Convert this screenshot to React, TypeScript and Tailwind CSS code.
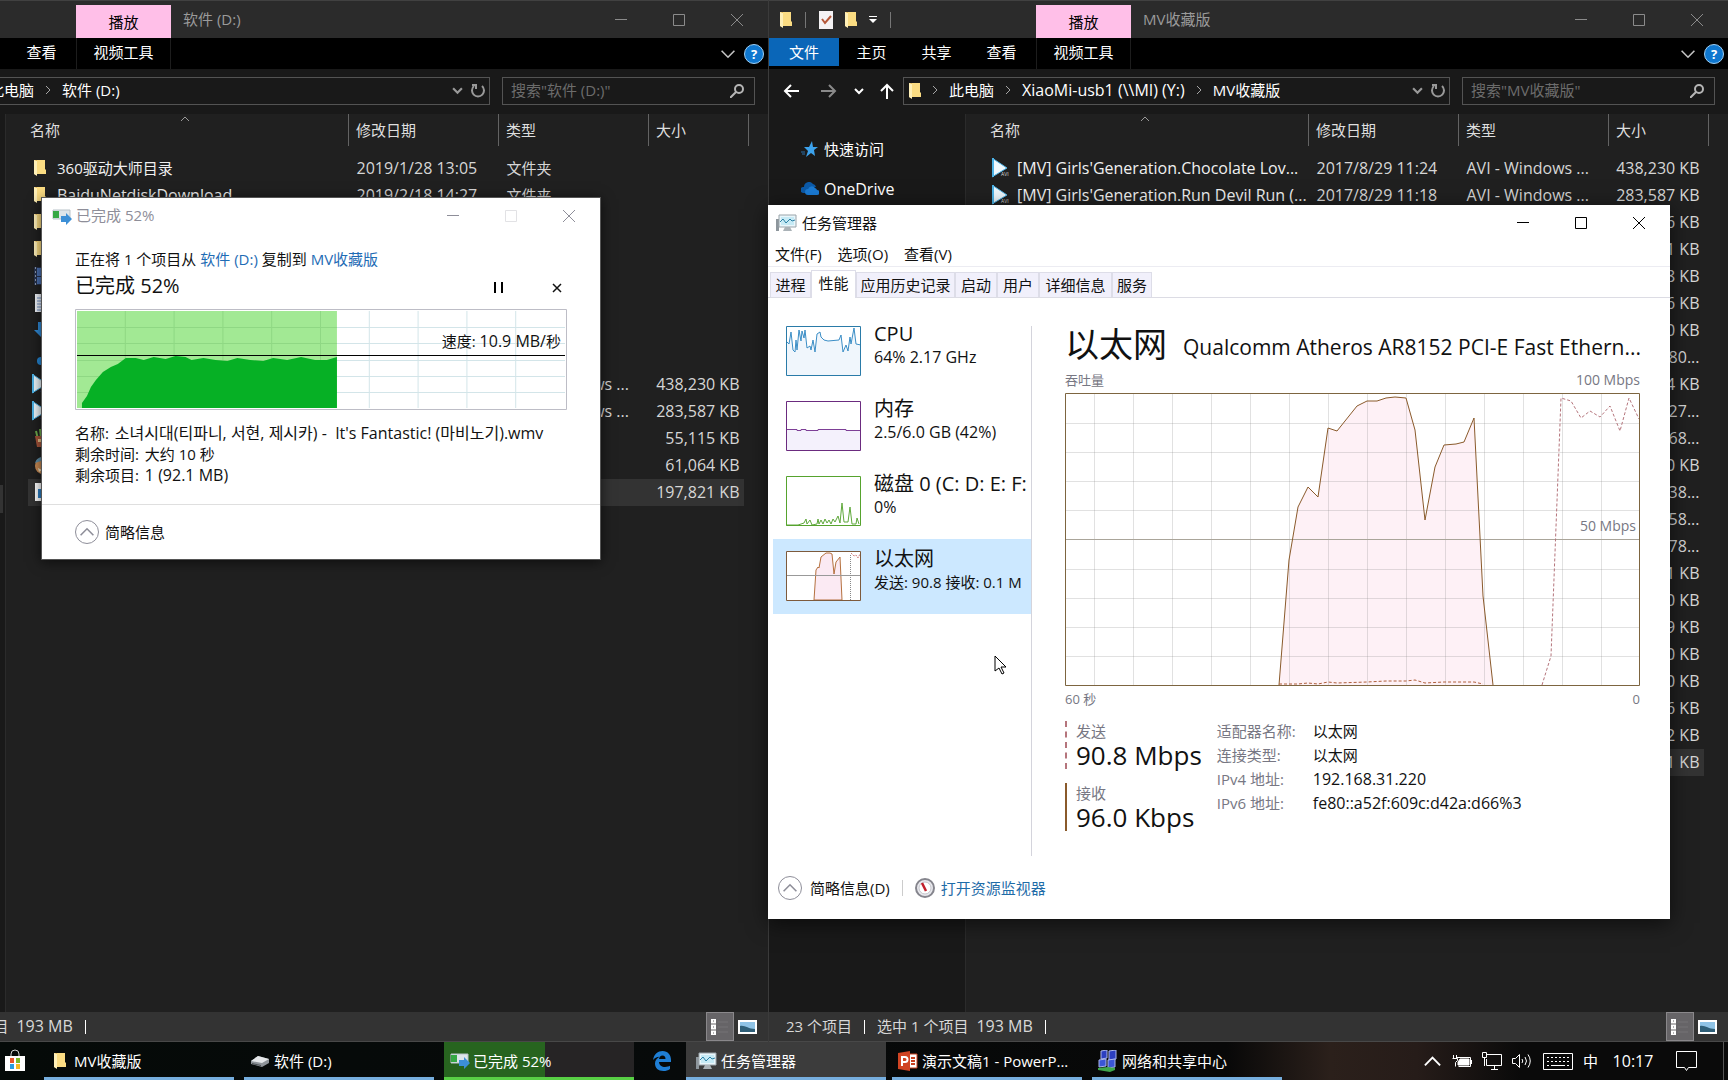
import { useState } from 'react';
import type { ReactNode } from 'react';
import { clsx } from 'clsx';

type FileRow = {
  icon?: 'folder' | 'video' | 'film' | 'doc' | 'down' | 'dot' | 'fries' | 'face' | 'wmv';
  name?: string;
  date?: string;
  type?: string;
  size?: string;
  selected?: boolean;
};

const AVI = 'AVI - Windows ...';

const leftRows: FileRow[] = [
  { icon: 'folder', name: '360驱动大师目录', date: '2019/1/28 13:05', type: '文件夹' },
  { icon: 'folder', name: 'BaiduNetdiskDownload', date: '2019/2/18 14:27', type: '文件夹' },
  { icon: 'folder' },
  { icon: 'folder' },
  { icon: 'film' },
  { icon: 'doc' },
  { icon: 'down' },
  { icon: 'dot' },
  { icon: 'video', type: AVI, size: '438,230 KB' },
  { icon: 'video', type: AVI, size: '283,587 KB' },
  { icon: 'fries', size: '55,115 KB' },
  { icon: 'face', size: '61,064 KB' },
  { icon: 'wmv', size: '197,821 KB', selected: true },
];

const rightRows: FileRow[] = [
  { icon: 'video', name: "[MV] Girls'Generation.Chocolate Lov...", date: '2017/8/29 11:24', type: AVI, size: '438,230 KB' },
  { icon: 'video', name: "[MV] Girls'Generation.Run Devil Run (...", date: '2017/8/29 11:18', type: AVI, size: '283,587 KB' },
  { size: '6 KB' },
  { size: '1 KB' },
  { size: '8 KB' },
  { size: '6 KB' },
  { size: '0 KB' },
  { size: '80...' },
  { size: '4 KB' },
  { size: '27...' },
  { size: '68...' },
  { size: '0 KB' },
  { size: '38...' },
  { size: '58...' },
  { size: '78...' },
  { size: '1 KB' },
  { size: '0 KB' },
  { size: '9 KB' },
  { size: '0 KB' },
  { size: '0 KB' },
  { size: '6 KB' },
  { size: '2 KB' },
  { size: '1 KB', selected: true },
];

// latin strings run one size larger than the Chinese ones
const sizeFor = (text?: string) => (text && /[\u4e00-\u9fff]/.test(text) ? 'text-[15px]' : 'text-base');

/* ---------- icons ---------- */

const FolderIcon = () => (
  <svg width="12" height="17" viewBox="0 0 12 17" className="shrink-0">
    <path d="M0 1h9v13H3v2L0 15z" fill="#e9b954" />
    <path d="M3 1h8v9l1 1v4H3z" fill="#fbdc82" />
    <path d="M0 1l3 1v15l-3-2z" fill="#fff0b8" />
  </svg>
);

const VideoIcon = () => (
  <svg width="20" height="20" viewBox="0 0 20 20" className="shrink-0">
    <path d="M0 0v19L15 10z" fill="#eef8fd" />
    <path d="M1 0v19" stroke="#4cb2e6" strokeWidth="2" />
    <path d="M0 0l15 10L0 19" fill="none" stroke="#4cb2e6" />
    <text x="9" y="18" fontSize="5" fill="#ddd">AVI</text>
  </svg>
);

const FileIcon = ({ kind }: { kind: FileRow['icon'] }) => {
  if (!kind) return null;
  if (kind === 'folder') return <FolderIcon />;
  if (kind === 'video') return <span className="-ml-0.5 block"><VideoIcon /></span>;
  return (
    <svg width="18" height="20" viewBox="0 0 18 20" className="shrink-0">
      {kind === 'film' && (
        <>
          <path d="M0 1h18v18H0z" fill="#26314a" />
          <path d="M3 2h12v8H3zM3 11h12v7H3z" fill="#4a70b0" />
          <path d="M1.500 1v18" stroke="#8c98ad" strokeDasharray="2 2" />
        </>
      )}
      {kind === 'doc' && (
        <>
          <path d="M1 1h16v18H1z" fill="#f1f5fb" />
          <path d="M3 5h12M3 8h12M3 11h12M3 14h12M3 17h8" stroke="#6f8fc4" />
        </>
      )}
      {kind === 'down' && <path d="M4 2h8v8h4l-8 8-8-8h4z" fill="#2f8ad8" />}
      {kind === 'dot' && (
        <>
          <circle cx="7" cy="14" r="4" fill="#2487d6" />
          <circle cx="9" cy="5" r="2" fill="#2487d6" />
        </>
      )}
      {kind === 'fries' && (
        <>
          <path d="M2 3l2 8M6 1l1 9M10 2l-1 8" stroke="#6fae4c" strokeWidth="2" />
          <path d="M1 8h14l-2 11H3z" fill="#a9553a" />
          <path d="M4 11h6v3H4z" fill="#e8c58c" />
        </>
      )}
      {kind === 'face' && (
        <>
          <circle cx="9" cy="11" r="8" fill="#c98a53" />
          <path d="M1 8c2-6 6-7 15-6l-3 5-6-1z" fill="#5f8fa8" />
          <path d="M4 13l4 2-3 2z" fill="#f0e2c0" />
        </>
      )}
      {kind === 'wmv' && (
        <>
          <path d="M1 1h12l4 4v14H1z" fill="#fff" />
          <path d="M4 7h11v9H4z" fill="#2d7fc4" />
          <path d="M8 9v5l4-2z" fill="#fff" />
        </>
      )}
    </svg>
  );
};

const Chevron = ({ dir = 'down', size = 10, width = 2 }: { dir?: 'down' | 'right' | 'up'; size?: number; width?: number }) => {
  const d = { down: 'M1 3l4 4 4-4', right: 'M3 1l4 4-4 4', up: 'M1 7l4-4 4 4' }[dir];
  return (
    <svg width={size} height={size} viewBox="0 0 10 10" fill="none" stroke="currentColor" strokeWidth={width} className="shrink-0">
      <path d={d} />
    </svg>
  );
};

const TaskMgrIcon = () => (
  <svg width="21" height="18" viewBox="0 0 21 18" className="shrink-0">
    <path d="M0 5h3v12H0z" fill="#8d969c" />
    <path d="M3 1h17v12H3z" fill="#e9f6fb" stroke="#9aa4aa" />
    <path d="M5 3h13v8H5z" fill="#c6eaf5" />
    <path d="M4 8l3-3 3 4 4-4 2 2 3-1" fill="none" stroke="#2b7fa3" />
    <path d="M9 13h5l2 4H7z" fill="#aab2b7" />
  </svg>
);

const CopyIcon = () => (
  <svg width="20" height="17" viewBox="0 0 20 17" className="shrink-0">
    <path d="M1 2h17v9H1z" fill="#dde5ea" stroke="#b9c3c9" />
    <path d="M1 3h6v7H1z" fill="#35a845" />
    <path d="M9 8h5V5l6 6-6 6v-3H9z" fill="#3c8fd6" />
  </svg>
);

const DriveIcon = () => (
  <svg width="20" height="14" viewBox="0 0 20 14" className="shrink-0">
    <path d="M1 7l7-5 11 3v4l-7 4-11-3z" fill="#8e9499" />
    <path d="M1 7l7-5 11 3-7 4z" fill="#e4e7e9" />
    <path d="M2 9l9 2v1L2 10z" fill="#4a4f53" />
  </svg>
);

const WindowButtons = ({ className, fadeMax }: { className?: string; fadeMax?: boolean }) => (
  <div className={clsx('ml-auto flex h-full shrink-0 pr-0.5', className)}>
    <button aria-label="最小化" className="flex w-[58px] items-center justify-center">
      <svg width="12" height="12" stroke="currentColor"><path d="M0 5.500h12" /></svg>
    </button>
    <button aria-label="最大化" className={clsx('flex w-[58px] items-center justify-center', fadeMax && 'opacity-25')}>
      <svg width="12" height="12" fill="none" stroke="currentColor"><path d="M.5.5h11v11H.5z" /></svg>
    </button>
    <button aria-label="关闭" className="flex w-[58px] items-center justify-center">
      <svg width="12" height="12" stroke="currentColor"><path d="M0 0l12 12M12 0L0 12" /></svg>
    </button>
  </div>
);

/* ---------- file explorer ---------- */

type ExplorerProps = {
  title: string;
  crumbs: string[];
  rows: FileRow[];
  nav: ReactNode;
};

const Explorer = ({ title, crumbs, rows, nav }: ExplorerProps) => (
  <section className="flex h-full min-w-0 flex-1 flex-col border-l border-[#3b3b3b] bg-[#191919] text-[15px] leading-5 text-white">
    <header className="flex h-[38px] shrink-0 items-center border-t border-[#414141] bg-[#2b2b2b]">
      <div className="flex w-[267px] shrink-0 items-center gap-3 pl-[11px]">
        <FolderIcon />
        <span className="mx-px h-4 w-px bg-[#777]" />
        <svg width="14" height="18" viewBox="0 0 14 18">
          <path d="M0 0h14v18H0z" fill="#f4f2f4" />
          <path d="M3 8l3 4 6-7" fill="none" stroke="#b5583a" strokeWidth="2" />
        </svg>
        <FolderIcon />
        <svg width="8" height="8" viewBox="0 0 8 8" fill="#fff"><path d="M0 0h8v1H0zM0 3h8L4 7z" /></svg>
        <span className="mx-px h-4 w-px bg-[#777]" />
      </div>
      <button className="mt-1 h-[33px] w-[95px] shrink-0 bg-[#ffbfe8] text-black">播放</button>
      <h1 className="ml-3 pb-0.5 text-[#9a9a9a]">{title}</h1>
      <WindowButtons className="text-[#8b8b8b]" />
    </header>

    <div className="flex h-[31px] shrink-0 bg-black">
      <div className="flex w-[267px] shrink-0">
        <button className="h-7 w-[70px] bg-[#0a66b8]">文件</button>
        <button className="w-[65px] pb-1">主页</button>
        <button className="w-[65px] pb-1">共享</button>
        <button className="w-[65px] pb-1">查看</button>
      </div>
      <button className="w-[95px] shrink-0 border-x border-[#1d1d1d] pb-1">视频工具</button>
      <div className="ml-auto flex items-center gap-2 pr-1 text-[#c4c4c4]">
        <button aria-label="展开功能区"><Chevron size={16} width={1} /></button>
        <button aria-label="帮助" className="h-5 w-5 rounded-full border border-[#9fd0f5] bg-[#0f77cf] text-[13px] leading-4 font-bold text-white">?</button>
      </div>
    </div>

    <div className="flex h-[45px] shrink-0 items-start pt-2 pr-[13px]">
      <div className="flex h-7 w-[134px] shrink-0 items-center">
        <button aria-label="后退" className="flex w-11 justify-center">
          <svg width="16" height="14" fill="none" stroke="#fff" strokeWidth="2"><path d="M16 7H2M8 1L2 7l6 6" /></svg>
        </button>
        <button aria-label="前进" className="flex w-8 justify-center">
          <svg width="16" height="14" fill="none" stroke="#8a8a8a" strokeWidth="2"><path d="M0 7h14M8 1l6 6-6 6" /></svg>
        </button>
        <button aria-label="最近位置" className="flex w-7 justify-center"><Chevron /></button>
        <button aria-label="上移" className="flex w-7 justify-center">
          <svg width="14" height="16" fill="none" stroke="#fff" strokeWidth="2"><path d="M7 16V2M1 8l6-6 6 6" /></svg>
        </button>
      </div>
      <nav className="flex h-7 min-w-0 flex-1 items-center gap-[9px] border border-[#535353] pr-1 pb-0.5 pl-[5px]">
        <FolderIcon />
        {crumbs.map((crumb) => (
          <span key={crumb} className="flex shrink-0 items-center gap-[9px]">
            <span className="text-[#a5a5a5]"><Chevron dir="right" size={10} width={1} /></span>
            <button className={sizeFor(crumb)}>{crumb}</button>
          </span>
        ))}
        <div className="ml-auto flex shrink-0 items-center gap-2 text-[#999]">
          <button aria-label="历史"><Chevron size={11} width={2} /></button>
          <button aria-label="刷新">
            <svg width="14" height="15" viewBox="0 0 14 15" fill="none" stroke="currentColor" strokeWidth="2">
              <path d="M3 3a6 6 0 1 0 8 0M1 2h4v4" />
            </svg>
          </button>
        </div>
      </nav>
      <label className="ml-3 flex h-7 w-[253px] shrink-0 items-center border border-[#535353] pr-2.5 pl-2">
        <input
          type="search"
          aria-label="搜索"
          className="min-w-0 flex-1 bg-transparent pb-0.5 placeholder:text-[#6c6c6c] focus:outline-none"
          placeholder={`搜索"${title}"`}
        />
        <svg width="14" height="14" fill="none" stroke="#b5b5b5" strokeWidth="2">
          <circle cx="9" cy="5" r="4" />
          <path d="M6 8l-6 6" />
        </svg>
      </label>
    </div>

    <div className="flex min-h-0 flex-1">
      <aside className="w-[197px] shrink-0 overflow-hidden border-r border-[#2b2b2b]">{nav}</aside>
      <div className="min-w-0 flex-1 overflow-hidden bg-[#202020] pr-[19px] pl-[22px]">
        <table className="w-full table-fixed border-collapse text-left">
          <thead>
            <tr className="h-8 text-[#dedede] [&>th]:p-0 [&>th]:font-normal">
              <th className="relative">
                <span className="pl-0.5">名称</span>
                <span className="absolute top-0 left-[152px] text-[#999]"><Chevron dir="up" size={10} width={1} /></span>
              </th>
              <th className="w-[150px] border-l border-[#636363]"><span className="pl-[7px]">修改日期</span></th>
              <th className="w-[150px] border-l border-[#636363]"><span className="pl-[7px]">类型</span></th>
              <th className="w-[95px] border-l border-[#636363]"><span className="pl-[7px]">大小</span></th>
              <th className="w-[5px] border-r border-[#636363]" />
            </tr>
            <tr className="h-[9px]" />
          </thead>
          <tbody>
            {rows.map((row, i) => (
              <tr
                key={i}
                className={clsx('h-[27px] text-[#d6d6d6] [&>td]:p-0 [&>td]:pb-0.5', row.selected && '[&>td:not(:last-child)]:bg-[#333]')}
              >
                <td>
                  <div className="flex h-[25px] items-center overflow-hidden pl-1.5">
                    <span className="w-[23px] shrink-0"><FileIcon kind={row.icon} /></span>
                    <span className={clsx('whitespace-nowrap text-[#f0f0f0]', sizeFor(row.name))}>{row.name}</span>
                  </div>
                </td>
                <td><span className="block pl-2 text-base leading-5 whitespace-nowrap">{row.date}</span></td>
                <td><span className={clsx('block pl-2 leading-5 whitespace-nowrap', sizeFor(row.type))}>{row.type}</span></td>
                <td><span className="block pr-1 text-right text-base leading-5 whitespace-nowrap">{row.size}</span></td>
                <td />
              </tr>
            ))}
          </tbody>
        </table>
      </div>
    </div>

    <footer className="flex h-[30px] shrink-0 items-center border-b border-[#484848] bg-[#333] pl-[17px] text-[#d8d8d8]">
      <span className="pb-0.5">23 个项目</span>
      <span className="mx-3 h-3.5 w-px bg-white" />
      <span className="pb-0.5">选中 1 个项目</span>
      <span className="ml-2 pb-0.5 text-base leading-5">193 MB</span>
      <span className="mx-3 h-3.5 w-px bg-white" />
      <div className="ml-auto flex h-full items-center gap-1 pr-[11px]">
        <button aria-label="详细信息" className="flex h-full w-7 items-center justify-center border border-[#8a888b] bg-[#666467]">
          <svg width="18" height="16" fill="none" stroke="#fff">
            <path d="M1 .5h3v3H1zM1 6.500h3v3H1zM1 12.500h3v3H1z" strokeWidth="2" />
            <path d="M7 3h10M7 8h10M7 13h10" stroke="#757376" />
          </svg>
        </button>
        <button aria-label="大图标">
          <svg width="19" height="14" viewBox="0 0 19 14">
            <path d="M0 0h19v14H0z" fill="#fff" />
            <path d="M2 2h15v10H2z" fill="#8fc3e6" />
            <path d="M2 6c5-1 8 3 15 3v3H2z" fill="#2f5f78" />
          </svg>
        </button>
      </div>
    </footer>
  </section>
);

/* ---------- copy progress dialog ---------- */

const speedArea =
  'M6 98V93L11 86 15 77 20 70 27 62 35 57 42 54 50 48 60 48 68 50 78 47 90 49 100 46 110 47 116 50 128 48 140 50 152 51 162 48 175 50 188 51 198 48 212 50 226 47 240 50 252 50 262 47V98Z';

const CopyDialog = () => (
  <section className="absolute top-[197px] left-[41px] w-[560px] border border-[#555] bg-white text-[15px] leading-5 text-[#111] shadow-[0_2px_12px_rgba(0,0,0,0.6)]">
    <header className="flex h-9 items-center gap-1 pl-2.5 text-[#8e8e99]">
      <CopyIcon />
      <h2 className="pb-0.5">已完成 52%</h2>
      <WindowButtons fadeMax />
    </header>
    <div className="px-[33px] pt-[15px]">
      <p>
        正在将 1 个项目从 <a href="#d" className="text-[#1f6cb5]">软件 (D:)</a> 复制到 <a href="#mv" className="text-[#1f6cb5]">MV收藏版</a>
      </p>
      <div className="flex h-[33px] items-center">
        <p className="text-xl leading-7">已完成 52%</p>
        <div className="ml-auto flex gap-[38px] pt-1">
          <button aria-label="暂停" className="w-5">
            <svg width="10" height="11" className="mx-auto"><path d="M0 0h2v11H0zM7 0h2v11H7z" /></svg>
          </button>
          <button aria-label="取消" className="w-5">
            <svg width="10" height="10" viewBox="0 0 10 10" className="mx-auto" stroke="#111" strokeWidth="1.500"><path d="M1 1l8 8M9 1L1 9" /></svg>
          </button>
        </div>
      </div>
      <div className="relative mt-[7px]">
        <svg width="100%" height="101" viewBox="0 0 494 101" preserveAspectRatio="none" className="block">
          <path d="M.5.5h493v100H.5z" fill="#fff" stroke="#bdbdc6" />
          <path d="M50.500 2v97M99.500 2v97M148.500 2v97M197.500 2v97M246.500 2v97M295.500 2v97M344.500 2v97M393.500 2v97M442.500 2v97M2 18.500h490M2 34.500h490M2 51.500h490M2 67.500h490M2 83.500h490" stroke="#d3e5e9" />
          <path d="M2 2h261v97H2z" fill="#a2e994" />
          <path d="M50.500 2v97M99.500 2v97M148.500 2v97M197.500 2v97M246.500 2v97M2 18.500h261M2 34.500h261M2 51.500h261M2 67.500h261M2 83.500h261" stroke="#8fd884" />
          <path d={speedArea} transform="translate(1 1)" fill="#06b025" />
          <path d="M2 46.500h490" stroke="#000" />
        </svg>
        <span className="absolute top-[22px] right-1.5">速度: <span className="text-base leading-5">10.9 MB/</span>秒</span>
      </div>
      <div className="mt-[13px] leading-[21px]">
        <p className="whitespace-nowrap">
          名称: <span className="ml-0.5 text-base leading-5">소녀시대(티파니, 서현, 제시카) -&nbsp; It's Fantastic! (마비노기).wmv</span>
        </p>
        <p>剩余时间: <span className="ml-0.5">大约 10 秒</span></p>
        <p>剩余项目: <span className="ml-0.5 text-base leading-5">1 (92.1 MB)</span></p>
      </div>
    </div>
    <footer className="mt-[18px] flex h-[55px] items-center border-t border-[#dfdfdf] px-[33px]">
      <button className="flex items-center gap-1.5">
        <span className="flex h-6 w-6 items-center justify-center rounded-full border border-[#8e8e99] text-[#8e8e99]">
          <Chevron dir="up" size={16} width={1} />
        </span>
        简略信息
      </button>
    </footer>
  </section>
);

/* ---------- task manager ---------- */

const tabs = [
  { label: '进程', width: 'w-[41px]' },
  { label: '性能', width: 'w-[45px]' },
  { label: '应用历史记录', width: 'w-[99px]' },
  { label: '启动', width: 'w-[42px]' },
  { label: '用户', width: 'w-[42px]' },
  { label: '详细信息', width: 'w-[73px]' },
  { label: '服务', width: 'w-[40px]' },
];

const received =
  '214,292 224,167 233,114 243,94 253,104 263,35 272,38 292,13 302,8 312,8 321,5 330,4 341,5 350,37 360,127 370,74 379,52 391,51 399,49 409,25 418,203 428,292';
const sent = '477,292 486,263 496,5 506,8 516,25 525,18 535,24 545,13 555,38 564,5 574,26';
const sentLow = '214,291 233,291 243,290 253,291 263,289 272,290 302,289 321,288 341,288 350,287 360,290 379,289 409,289 418,291';

const gridX = [29, 68, 107, 146, 185, 224, 263, 302, 341, 380, 419, 458, 497, 536];
const gridY = [30, 59, 88, 117, 176, 205, 234, 263];

const ThroughputChart = () => (
  <svg width="100%" height="293" viewBox="0 0 575 293" preserveAspectRatio="none" className="block">
    <polygon points={received} fill="#fef1f6" />
    <g stroke="#888" strokeOpacity="0.250">
      {gridX.map((x) => <path key={x} d={`M${x + 0.5} 0v292`} />)}
      {gridY.map((y) => <path key={y} d={`M0 ${y + 0.5}h575`} />)}
    </g>
    <path d="M0 146.500h575" stroke="#aaa59a" />
    <polyline points={received} fill="none" stroke="#8a5a2b" />
    <polyline points={sent} fill="none" stroke="#b5757c" strokeDasharray="3 2" />
    <polyline points={sentLow} fill="none" stroke="#b0603c" strokeDasharray="3 2" />
    <path d="M.5.5h574v292H.5z" fill="none" stroke="#7d6540" />
  </svg>
);

const Thumb = ({ stroke, children }: { stroke: string; children: ReactNode }) => (
  <svg width="75" height="50" viewBox="0 0 75 50" className="shrink-0">
    <path d="M.5.5h74v49H.5z" fill="#fff" />
    {children}
    <path d="M.5.5h74v49H.5z" fill="none" stroke={stroke} />
  </svg>
);

const cpuLine = '1,16 3,18 5,6 7,24 9,26 10,14 11,24 13,4 15,15 16,5 18,12 19,4 21,22 24,20 25,24 27,14 29,26 31,8 34,6 35,11 38,14 42,15 53,14 55,9 57,26 60,19 62,25 64,11 65,18 68,2 70,18 75,19';
const diskLine = '0,49 12,49 15,48 18,47 20,43 21,48 24,44 26,49 31,48 32,43 33,48 35,44 37,48 39,43 41,47 43,44 45,48 47,43 49,46 52,40 54,47 56,27 58,46 62,46 64,31 66,48 70,48 71,42 73,48';

const devices = [
  {
    id: 'cpu',
    title: 'CPU',
    detail: '64% 2.17 GHz',
    thumb: (
      <Thumb stroke="#2a7ba8">
        <polygon points={`${cpuLine} 75,49 1,49`} fill="#f0f6fc" />
        <polyline points={cpuLine} fill="none" stroke="#3b8ec6" />
      </Thumb>
    ),
  },
  {
    id: 'mem',
    title: '内存',
    detail: '2.5/6.0 GB (42%)',
    thumb: (
      <Thumb stroke="#6b2b7f">
        <path d="M1 29h73v20H1z" fill="#f4f1fc" />
        <path d="M1 28.500h10v1h4v-1h5v1h12v-1h28v1h14" fill="none" stroke="#7d3f96" />
      </Thumb>
    ),
  },
  {
    id: 'disk',
    title: '磁盘 0 (C: D: E: F:',
    detail: '0%',
    thumb: (
      <Thumb stroke="#56a32e">
        <polyline points={diskLine} fill="none" stroke="#5fa83c" />
      </Thumb>
    ),
  },
  {
    id: 'eth',
    title: '以太网',
    detail: '发送: 90.8 接收: 0.1 M',
    thumb: (
      <Thumb stroke="#7d5a3c">
        <path d="M28 49l2-30 2-3 1 1 2-11 5-4h4l2 1 2 20 2-12 4-5 2 43z" fill="#fbeaf3" stroke="#b5713f" />
        <path d="M0 24.500h75" stroke="#999" />
        <path d="M64.500 49V3" fill="none" stroke="#888" strokeDasharray="1 1" />
        <path d="M65 2l3 3 2-1 2 3 2-4" fill="none" stroke="#d08080" strokeDasharray="2 1" />
      </Thumb>
    ),
  },
];

const details = [
  ['适配器名称:', '以太网'],
  ['连接类型:', '以太网'],
  ['IPv4 地址:', '192.168.31.220'],
  ['IPv6 地址:', 'fe80::a52f:609c:d42a:d66%3'],
];

const TaskManager = () => {
  const [tab, setTab] = useState('性能');
  const [device, setDevice] = useState('eth');

  return (
    <section className="absolute top-[205px] left-4/9 w-[902px] bg-white text-[15px] leading-5 text-[#111] shadow-[0_4px_20px_rgba(0,0,0,0.6)]">
      <header className="flex h-9 items-center gap-[5px] pl-2">
        <TaskMgrIcon />
        <h2>任务管理器</h2>
        <WindowButtons className="text-black" />
      </header>
      <div className="flex h-[26px] items-center gap-4 border-b border-[#ececf2] pl-[7px]">
        <button>文件(F)</button>
        <button>选项(O)</button>
        <button>查看(V)</button>
      </div>
      <div role="tablist" className="flex h-[31px] items-end border-b border-[#dcdce4] pl-0.5">
        {tabs.map(({ label, width }) => (
          <button
            key={label}
            role="tab"
            aria-selected={tab === label}
            onClick={() => setTab(label)}
            className={clsx(
              'shrink-0 border-x border-t border-[#dddde8] whitespace-nowrap',
              width,
              tab === label ? '-mb-px h-7 bg-white pb-1' : 'h-[25px] bg-[#f1f0fb]',
            )}
          >
            {label}
          </button>
        ))}
      </div>

      <div className="flex pt-4">
        <div className="w-[263px] shrink-0 pl-[5px]">
          {devices.map(({ id, title, detail, thumb }) => (
            <button
              key={id}
              onClick={() => setDevice(id)}
              className={clsx('flex h-[75px] w-full gap-[13px] pt-3 pl-[13px] text-left whitespace-nowrap', device === id && 'bg-[#cce8ff]')}
            >
              {thumb}
              <span className="-mt-1">
                <span className="block text-xl leading-6">{title}</span>
                <span className={clsx('block leading-[22px]', sizeFor(detail))}>{detail}</span>
              </span>
            </button>
          ))}
        </div>

        <div className="mt-3 min-w-0 flex-1 border-l border-[#d4d4dc] pr-[30px] pb-[25px] pl-[33px]">
          <div className="flex items-end gap-4">
            <h3 className="shrink-0 pb-0.5 text-[34px] leading-9">以太网</h3>
            <span className="min-w-0 flex-1 text-right text-[21px] leading-[34px] whitespace-nowrap">Qualcomm Atheros AR8152 PCI-E Fast Ethern...</span>
          </div>
          <div className="mt-1.5 flex justify-between text-[13px] text-[#777783]">
            <span>吞吐量</span>
            <span className="text-sm leading-5">100 Mbps</span>
          </div>
          <div className="relative mt-[3px]">
            <ThroughputChart />
            <span className="absolute top-[123px] right-1 text-sm leading-5 text-[#777783]">50 Mbps</span>
          </div>
          <div className="mt-[3px] flex justify-between text-[13px] text-[#777783]">
            <span>60 秒</span>
            <span>0</span>
          </div>
          <div className="mt-3 flex gap-[15px]">
            <div className="flex flex-col gap-3.5">
              <div className="border-l-2 border-dashed border-[#b5757c] pl-[9px]">
                <p className="text-[#777783]">发送</p>
                <p className="text-[26px] leading-7">90.8 Mbps</p>
              </div>
              <div className="border-l-2 border-[#8a5a2b] pl-[9px]">
                <p className="text-[#777783]">接收</p>
                <p className="text-[26px] leading-7">96.0 Kbps</p>
              </div>
            </div>
            <dl className="grid auto-rows-[24px] grid-cols-[80px_1fr] gap-x-4">
              {details.map(([label, value]) => (
                <div key={label} className="contents">
                  <dt className="leading-5 whitespace-nowrap text-[#777783]">{label}</dt>
                  <dd className={clsx('leading-5', sizeFor(value))}>{value}</dd>
                </div>
              ))}
            </dl>
          </div>
        </div>
      </div>

      <footer className="flex h-[63px] items-center pl-2.5">
        <button className="flex items-center gap-2">
          <span className="flex h-6 w-6 items-center justify-center rounded-full border border-[#8e8e99] text-[#8e8e99]">
            <Chevron dir="up" size={16} width={1} />
          </span>
          简略信息(D)
        </button>
        <span className="mx-3 h-4 w-px bg-[#ccc]" />
        <a href="#resmon" className="flex items-center gap-1.5 text-[#1f6ca8]">
          <svg width="20" height="20" viewBox="0 0 20 20">
            <circle cx="10" cy="10" r="9" fill="#e9e9ee" stroke="#85858d" strokeWidth="2" />
            <circle cx="10" cy="10" r="6" fill="#fff" stroke="#c5c5cc" />
            <path d="M7 5l4 8" stroke="#c11f2b" strokeWidth="2.500" />
          </svg>
          打开资源监视器
        </a>
      </footer>
    </section>
  );
};

/* ---------- taskbar ---------- */

const TaskButton = ({ icon, label, active }: { icon: ReactNode; label: string; active?: boolean }) => (
  <button
    className={clsx(
      'flex h-full shrink-0 items-center gap-1 overflow-hidden border-b-3 border-[#76aede] pt-0.5 whitespace-nowrap',
      active ? 'w-[200px] bg-[#3c3c3c] pl-2.5' : 'w-[190px] pl-1.5',
    )}
  >
    {icon}
    <span>{label}</span>
  </button>
);

const Taskbar = () => (
  <footer className="flex h-[38px] shrink-0 items-center bg-[linear-gradient(90deg,#050a08_0%,#070a0a_40%,#080808_71%,#2b201b_77%,#261c19_82%,#0a0a0a_88%,#0a0a0a_100%)] text-[15px] leading-5 text-white">
    <button aria-label="应用商店" className="w-11 shrink-0 pl-[5px]">
      <svg width="20" height="24" viewBox="0 0 20 24">
        <path d="M6 8V5a4 4 0 0 1 8 0v3" fill="none" stroke="#d5d5d5" />
        <path d="M0 7h20v15H0z" fill="#fff" />
        <path d="M5 9h4v5H5z" fill="#e8562a" />
        <path d="M11 9h4v5h-4z" fill="#7cb928" />
        <path d="M5 15h4v5H5z" fill="#2a9de0" />
        <path d="M11 15h4v5h-4z" fill="#f5b921" />
      </svg>
    </button>
    <div className="flex h-full shrink-0 gap-2.5">
      <TaskButton label="MV收藏版" icon={<span className="flex w-5 justify-center"><FolderIcon /></span>} />
      <TaskButton label="软件 (D:)" icon={<DriveIcon />} />
      <button className="flex h-full w-[190px] items-center gap-[3px] border-b-3 border-[#58cf45] bg-[linear-gradient(90deg,#27641f_53%,#262425_53%)] pt-0.5 pl-1.5">
        <CopyIcon />
        <span>已完成 52%</span>
      </button>
    </div>
    <button aria-label="Edge" className="flex w-[52px] shrink-0 justify-center pl-1">
      <svg width="18" height="20" viewBox="0 0 18 20">
        <path
          d="M0 9C1 3 5 0 9.500 0 15 0 18 4 18 9v2H6c0 3 3 5 6 5 2 0 4-.5 5-1.200V18c-2 1.500-4 2-6.500 2C5 20 2 17 2 12.500 2 9.500 4 7 6.500 5.800 3.500 6 1.500 7 0 9zm6-1h6.500c0-2-1-3.500-3-3.500S6.500 6 6 8z"
          fill="#1f7fd6"
        />
      </svg>
    </button>
    <TaskButton active label="任务管理器" icon={<TaskMgrIcon />} />
    <div className="ml-1.5 flex h-full gap-2.5">
      <TaskButton
        label="演示文稿1 - PowerP..."
        icon={
          <svg width="20" height="20" viewBox="0 0 20 20">
            <path d="M10 3h9v14h-9z" fill="#fff" stroke="#c8401f" />
            <path d="M13 7h4M13 10h4M13 13h4" stroke="#c8401f" strokeWidth="2" />
            <path d="M0 2l12-2v20L0 18z" fill="#d04423" />
            <path d="M4 15V6h3a2.500 2.500 0 0 1 0 5H4" fill="none" stroke="#fff" strokeWidth="2" />
          </svg>
        }
      />
      <TaskButton
        label="网络和共享中心"
        icon={
          <svg width="20" height="22" viewBox="0 0 20 22">
            <path d="M3 1l6-1v8l-6 1zM11 1l7-1v9l-7 1z" fill="#2c3fc0" stroke="#aab6ee" />
            <path d="M1 10l7-1v7l-7 1zM10 10l7-1v8l-7 1z" fill="#3b55d6" stroke="#aab6ee" />
            <path d="M0 18l10-1 7 1v2l-5 2-12-2z" fill="#3fa64c" />
          </svg>
        }
      />
    </div>

    <div className="ml-auto flex shrink-0 items-center gap-2.5">
      <button aria-label="显示隐藏的图标"><Chevron dir="up" size={19} width={1} /></button>
      <svg width="20" height="14" viewBox="0 0 20 14" fill="none" stroke="#fff">
        <path d="M4.500 3.500h14v9h-12" />
        <path d="M8 5h9v6H6V8z" fill="#fff" />
        <path d="M19.500 6v4M1.500 1v3M4.500 1v3M.5 4.500h5v2l-2 2v4" />
      </svg>
      <svg width="20" height="18" viewBox="0 0 20 18" fill="none" stroke="#fff">
        <path d="M5 2.500h14.500v11H4.500V7M9 17.500h7M12.500 14v3M.5.5h4v5h-4zM2.500 6v8" />
      </svg>
      <svg width="21" height="18" viewBox="0 0 21 18" fill="none" stroke="#fff">
        <path d="M.5 6.500h3l4-4v13l-4-4h-3zM10 7q1.500 2 0 4M13 5q3 4 0 8M16 2.500q4.500 6.500 0 13" />
      </svg>
      <svg width="30" height="17" viewBox="0 0 30 17" fill="none" stroke="#fff">
        <path d="M.5.5h29v16H.5z" />
        <path d="M4 4.500h22M4 8.500h22" strokeDasharray="2 2" />
        <path d="M4 12.500h2M8 12.500h14M24 12.500h2" />
      </svg>
      <button>中</button>
      <time className="ml-1 w-[42px] text-center text-base leading-5">10:17</time>
      <button aria-label="操作中心" className="ml-3">
        <svg width="21" height="20" viewBox="0 0 21 20" fill="none" stroke="#fff">
          <path d="M.5.5h20v16h-8l-2 3-2-3h-8z" />
        </svg>
      </button>
      <span className="ml-4 h-[38px] w-[5px] border-l border-[#555]" />
    </div>
  </footer>
);

const NavLink = ({ icon, label }: { icon: ReactNode; label: string }) => (
  <a href="#nav" className="flex h-10 items-center gap-[5px] pl-8">
    {icon}
    <span className={sizeFor(label)}>{label}</span>
  </a>
);

const App = () => (
  <main className="relative flex h-screen flex-col overflow-hidden bg-black font-['Open_Sans','Noto_Sans_CJK_SC','Noto_Sans_CJK_KR',sans-serif]">
    <div className="flex min-h-0 flex-1">
      <div className="flex w-4/9 shrink-0 justify-end overflow-hidden">
        <div className="w-[125%] shrink-0">
          <Explorer title="软件 (D:)" crumbs={['此电脑', '软件 (D:)']} rows={leftRows} nav={<div className="mt-[371px] mr-0.5 h-7 bg-[#333]" />} />
        </div>
      </div>
      <div className="min-w-0 flex-1">
        <Explorer
          title="MV收藏版"
          crumbs={['此电脑', 'XiaoMi-usb1 (\\\\MI) (Y:)', 'MV收藏版']}
          rows={rightRows}
          nav={
            <div className="pt-[15px]">
              <NavLink
                label="快速访问"
                icon={
                  <svg width="18" height="16" viewBox="0 0 18 16">
                    <path d="M11 0l1 6h5l-4 3 1 6-4-3-5 4 2-6-4-4h5z" fill="#3ca2ec" />
                    <path d="M0 11h4M1 13h3" stroke="#2a6fa8" />
                  </svg>
                }
              />
              <NavLink
                label="OneDrive"
                icon={
                  <svg width="18" height="14" viewBox="0 0 18 14">
                    <path d="M2 11a3 3 0 0 1 1-6 5 5 0 0 1 9-3 4 4 0 0 1 3 3L8 6l-2 5z" fill="#0c5aa8" />
                    <path d="M7 13a3 3 0 0 1 0-6 4 4 0 0 1 7-1 3 3 0 0 1 2 2 2.500 2.500 0 0 1 0 5z" fill="#1a7ad4" />
                  </svg>
                }
              />
            </div>
          }
        />
      </div>
    </div>
    <Taskbar />
    <CopyDialog />
    <TaskManager />
    <svg width="13" height="20" viewBox="0 0 13 20" className="pointer-events-none absolute top-[655px] left-[994px]">
      <path d="M1 1v15l4-3 3 6 2-1-3-6h5z" fill="#fff" stroke="#000" />
    </svg>
  </main>
);

export default App;
